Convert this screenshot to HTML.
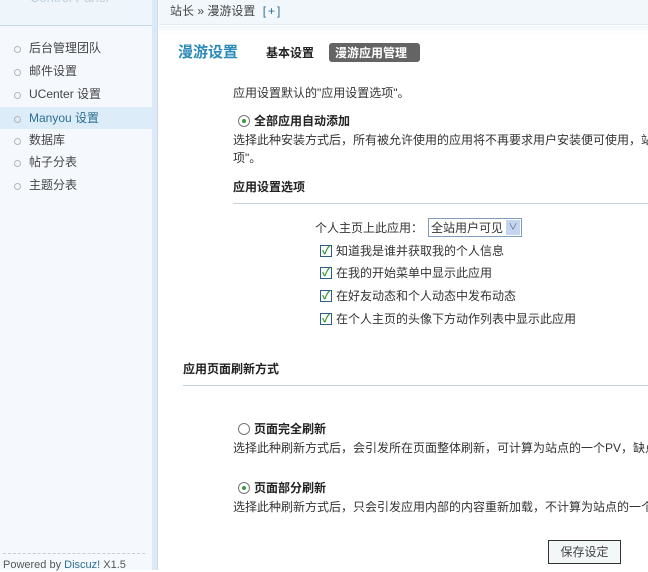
<!DOCTYPE html>
<html><head><meta charset="utf-8"><style>
*{margin:0;padding:0;box-sizing:border-box}
body{width:648px;height:570px;overflow:hidden;background:#fff;font-family:"Liberation Sans","Noto Sans CJK SC","WenQuanYi Zen Hei",sans-serif;font-size:12px;color:#333;position:relative}
.a{position:absolute;white-space:nowrap;line-height:14px}
.b{font-weight:bold;color:#222}
.side{position:absolute;left:0;top:0;width:152px;height:570px;background:#f5f9fe}
.strip{position:absolute;left:152px;top:0;width:6px;height:570px;background:#dde9f6;border-right:1px solid #c9dbee}
.stop{position:absolute;left:0;top:0;width:152px;height:26px;background:#eef5fb;border-bottom:1px solid #c9d9e9}
.mtop{position:absolute;left:159px;top:0;width:489px;height:25px;background:#f2f7fc;border-bottom:1px solid #e2ecf5}
.grad{position:absolute;left:159px;top:26px;width:489px;height:10px;background:linear-gradient(#f4f8fc,#fff)}
.item{position:absolute;left:0;width:152px;height:22px;line-height:22px;padding-left:29px;color:#444;font-size:12px}
.item:before{content:"";position:absolute;left:14px;top:9px;width:5px;height:5px;border:1px solid #b5b5b5;border-radius:50%}
.act{background:#dcecf8;color:#2c6f93}
.radio{position:absolute;width:12px;height:12px;border:1px solid #777;border-radius:50%;background:#fff}
.radio.on:after{content:"";position:absolute;left:3px;top:3px;width:4px;height:4px;border-radius:50%;background:#3a9a3a}
.cb{position:absolute;width:12px;height:12px;border:1px solid #2d5e8a;background:#fff;color:#2a9a2a;font-size:11px;line-height:10px;text-align:center;font-weight:bold}
.hr{position:absolute;height:1px;background:#c5d4e0}
</style></head><body>
<div class="side"></div><div class="strip"></div><div class="stop"></div>
<div class="a" style="left:30px;top:-9px;color:#c0cfdc;font-size:13px">Control Panel</div>
<div class="item" style="top:37px">后台管理团队</div>
<div class="item" style="top:60px">邮件设置</div>
<div class="item" style="top:83px">UCenter 设置</div>
<div class="item act" style="top:107px">Manyou 设置</div>
<div class="item" style="top:129px">数据库</div>
<div class="item" style="top:151px">帖子分表</div>
<div class="item" style="top:174px">主题分表</div>
<div style="position:absolute;left:3px;top:553px;width:142px;border-top:1px dashed #ccc"></div>
<div class="a" style="left:3px;top:558px;font-size:11px;color:#555">Powered by <span style="color:#2c6f93">Discuz!</span> X1.5</div>
<div class="mtop"></div><div class="grad"></div>
<div class="a" style="left:170px;top:4px;color:#444">站长 » 漫游设置 <span style="color:#2c6f93;margin-left:4px;letter-spacing:2px">[+]</span></div>
<div class="a" style="left:178px;top:44px;font-size:15px;font-weight:bold;color:#2a8ab8;line-height:17px">漫游设置</div>
<div class="a b" style="left:266px;top:46px">基本设置</div>
<div style="position:absolute;left:329px;top:43px;width:91px;height:19px;background:#646464;border-radius:3px"></div>
<div class="a" style="left:335px;top:46px;color:#fff;font-weight:bold">漫游应用管理</div>
<div class="a" style="left:233px;top:86px">应用设置默认的"应用设置选项"。</div>
<div class="radio on" style="left:238px;top:115px"></div>
<div class="a b" style="left:254px;top:114px">全部应用自动添加</div>
<div class="a" style="left:233px;top:133px">选择此种安装方式后，所有被允许使用的应用将不再要求用户安装便可使用，站点</div>
<div class="a" style="left:233px;top:151px">项"。</div>
<div class="a b" style="left:233px;top:180px">应用设置选项</div>
<div class="hr" style="left:233px;top:203px;width:415px"></div>
<div class="a" style="left:315px;top:221px">个人主页上此应用：</div>
<div style="position:absolute;left:428px;top:218px;width:94px;height:19px;border:1px solid #7f9db9;background:#fff"></div>
<div class="a" style="left:431px;top:221px">全站用户可见</div>
<div style="position:absolute;left:506px;top:220px;width:14px;height:15px;background:#c5d5f0;color:#4d6185;font-size:9px;text-align:center;line-height:15px">&#8744;</div>
<div class="cb" style="left:320px;top:245px">✓</div><div class="a" style="left:336px;top:244px">知道我是谁并获取我的个人信息</div>
<div class="cb" style="left:320px;top:267px">✓</div><div class="a" style="left:336px;top:266px">在我的开始菜单中显示此应用</div>
<div class="cb" style="left:320px;top:290px">✓</div><div class="a" style="left:336px;top:289px">在好友动态和个人动态中发布动态</div>
<div class="cb" style="left:320px;top:313px">✓</div><div class="a" style="left:336px;top:312px">在个人主页的头像下方动作列表中显示此应用</div>
<div class="a b" style="left:183px;top:362px">应用页面刷新方式</div>
<div class="hr" style="left:183px;top:385px;width:465px"></div>
<div class="radio" style="left:238px;top:423px"></div>
<div class="a b" style="left:254px;top:422px">页面完全刷新</div>
<div class="a" style="left:233px;top:441px">选择此种刷新方式后，会引发所在页面整体刷新，可计算为站点的一个PV，缺点</div>
<div class="radio on" style="left:238px;top:482px"></div>
<div class="a b" style="left:254px;top:481px">页面部分刷新</div>
<div class="a" style="left:233px;top:500px">选择此种刷新方式后，只会引发应用内部的内容重新加载，不计算为站点的一个</div>
<div style="position:absolute;left:548px;top:540px;width:73px;height:24px;border:1px solid #333;background:#f4f7f7;text-align:center;line-height:22px;color:#444">保存设定</div>
</body></html>
